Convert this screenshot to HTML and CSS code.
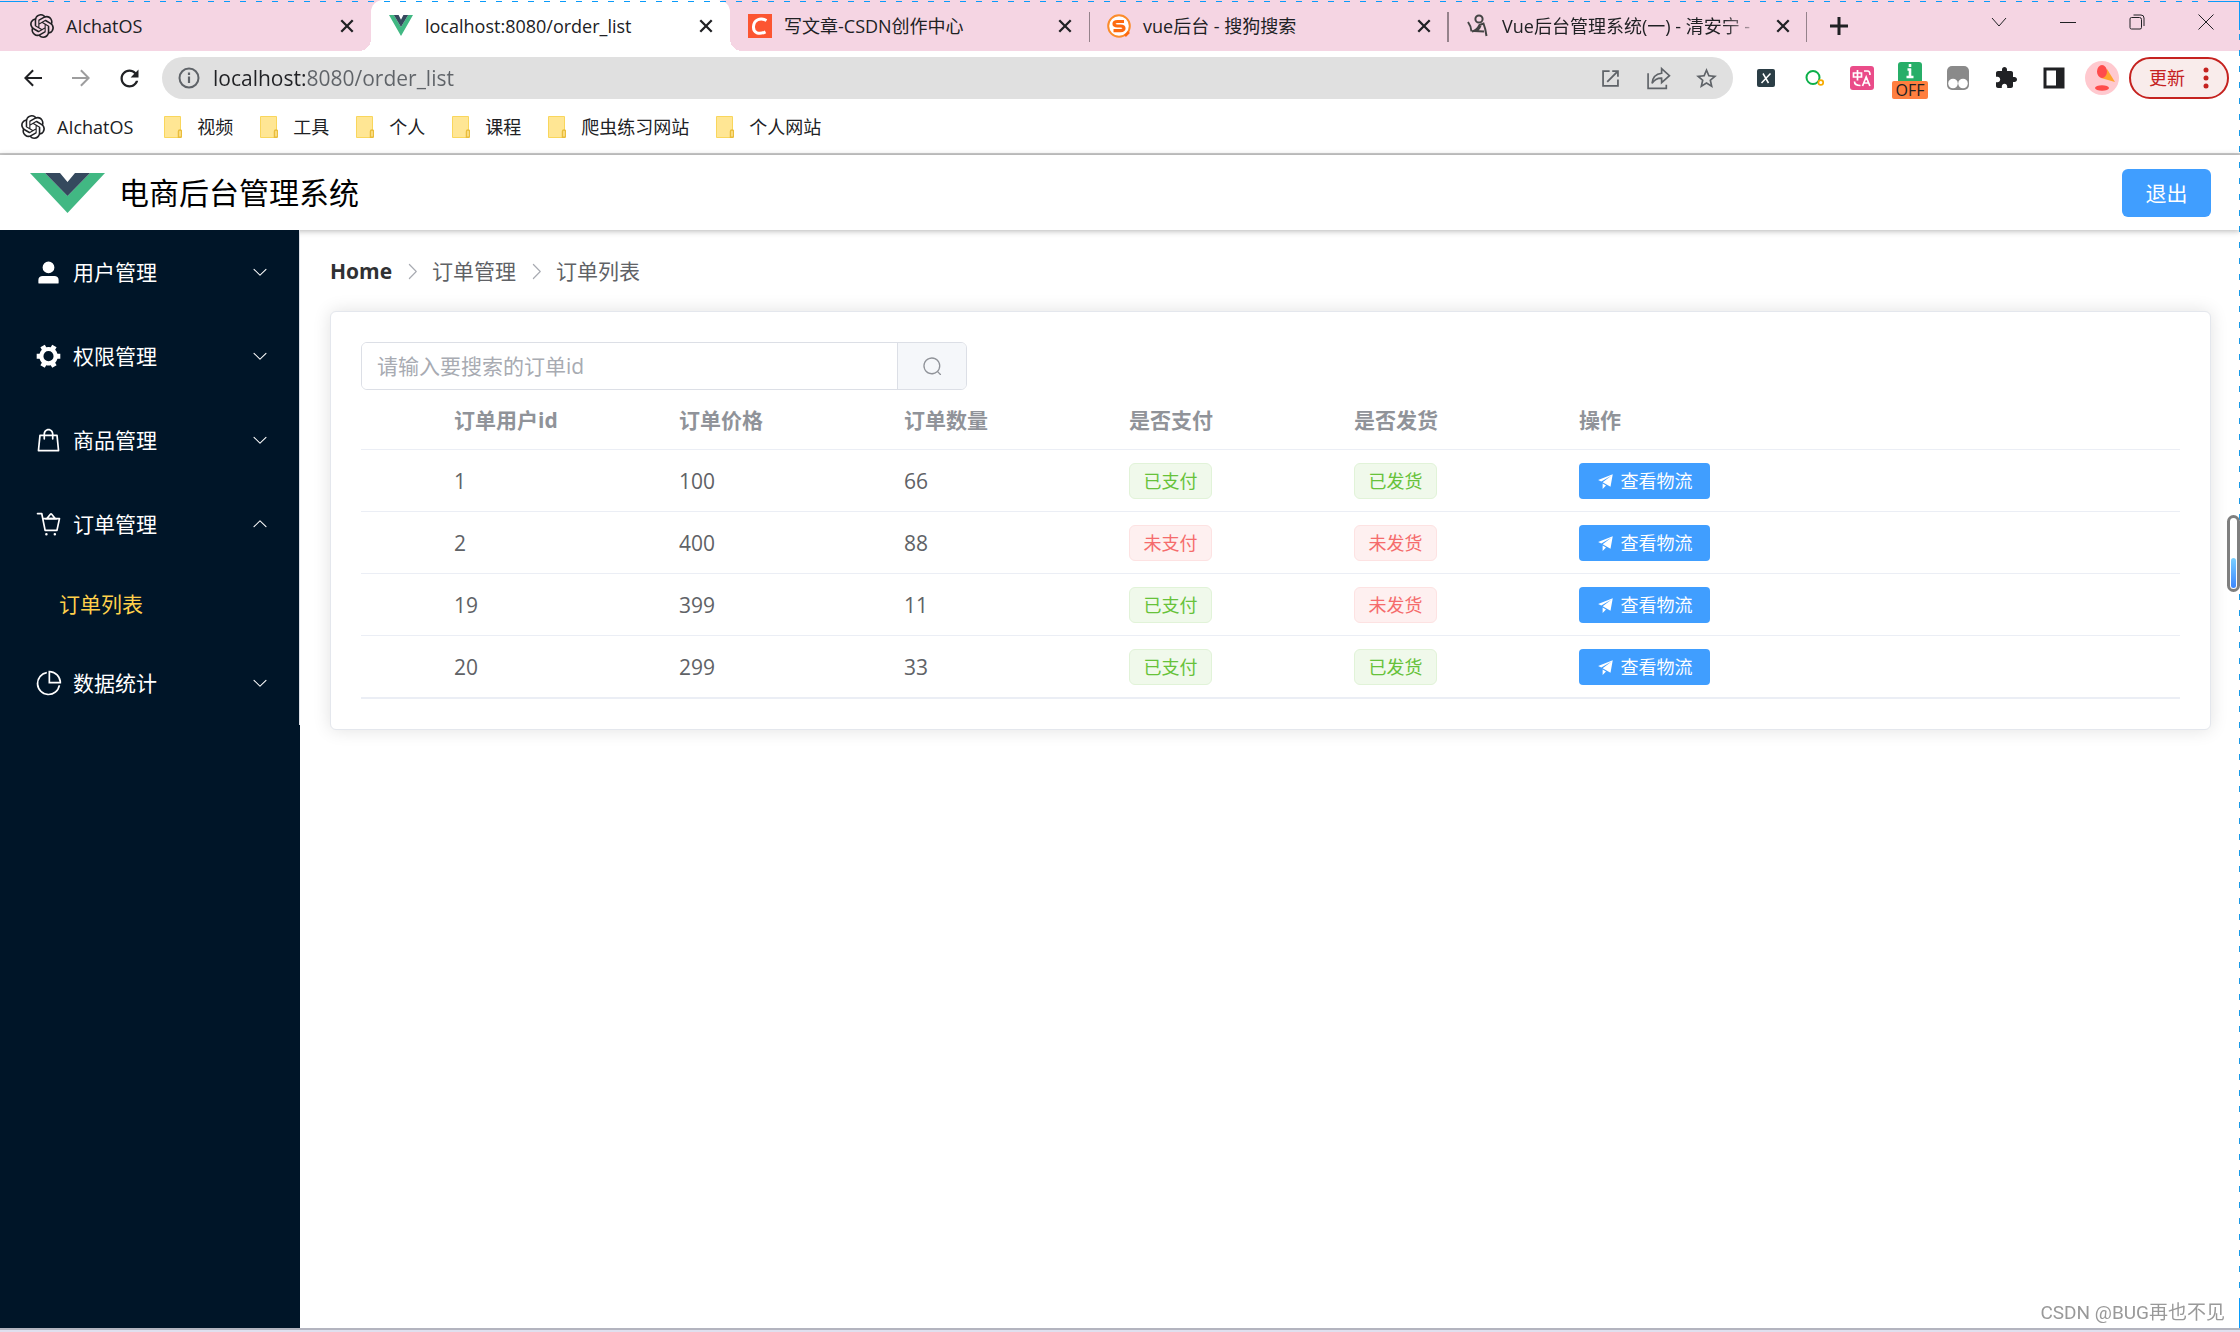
FILE: index.html
```html
<!DOCTYPE html>
<html lang="zh-CN">
<head>
<meta charset="utf-8">
<title>电商后台管理系统</title>
<link rel="stylesheet" href="styles.css">
</head>
<body>
<svg class="defs" aria-hidden="true">
  <symbol id="i-openai" viewBox="0 0 24 24"><path d="M22.2819 9.8211a5.9847 5.9847 0 0 0-.5157-4.9108 6.0462 6.0462 0 0 0-6.5098-2.9A6.0651 6.0651 0 0 0 4.9807 4.1818a5.9847 5.9847 0 0 0-3.9977 2.9 6.0462 6.0462 0 0 0 .7427 7.0966 5.98 5.98 0 0 0 .511 4.9107 6.051 6.051 0 0 0 6.5146 2.9001A5.9847 5.9847 0 0 0 13.2599 24a6.0557 6.0557 0 0 0 5.7718-4.2058 5.9894 5.9894 0 0 0 3.9977-2.9001 6.0557 6.0557 0 0 0-.7475-7.0729zm-9.022 12.6081a4.4755 4.4755 0 0 1-2.8764-1.0408l.1419-.0804 4.7783-2.7582a.7948.7948 0 0 0 .3927-.6813v-6.7369l2.02 1.1686a.071.071 0 0 1 .038.052v5.5826a4.504 4.504 0 0 1-4.4945 4.4944zm-9.6607-4.1254a4.4708 4.4708 0 0 1-.5346-3.0137l.142.0852 4.783 2.7582a.7712.7712 0 0 0 .7806 0l5.8428-3.3685v2.3324a.0804.0804 0 0 1-.0332.0615L9.74 19.9502a4.4992 4.4992 0 0 1-6.1408-1.6464zM2.3408 7.8956a4.485 4.485 0 0 1 2.3655-1.9728V11.6a.7664.7664 0 0 0 .3879.6765l5.8144 3.3543-2.0201 1.1685a.0757.0757 0 0 1-.071 0l-4.8303-2.7865A4.504 4.504 0 0 1 2.3408 7.872zm16.5963 3.8558L13.1038 8.364 15.1192 7.2a.0757.0757 0 0 1 .071 0l4.8303 2.7913a4.4944 4.4944 0 0 1-.6765 8.1042v-5.6772a.79.79 0 0 0-.407-.667zm2.0107-3.0231l-.142-.0852-4.7735-2.7818a.7759.7759 0 0 0-.7854 0L9.409 9.2297V6.8974a.0662.0662 0 0 1 .0284-.0615l4.8303-2.7866a4.4992 4.4992 0 0 1 6.6802 4.66zM8.3065 12.863l-2.02-1.1638a.0804.0804 0 0 1-.038-.0567V6.0742a4.4992 4.4992 0 0 1 7.3757-3.4537l-.142.0805L8.704 5.459a.7948.7948 0 0 0-.3927.6813zm1.0976-2.3654l2.602-1.4998 2.6069 1.4998v2.9994l-2.5974 1.4997-2.6067-1.4997Z"/></symbol>
  <symbol id="i-vue" viewBox="0 0 75 54" preserveAspectRatio="none"><path fill="#41b883" d="M0 0h15l22.500 31L60 0h15L37.500 54z"/><path fill="#35495e" d="M15 0h15l7.500 12L45 0h15L37.500 31z"/></symbol>
  <symbol id="i-close" viewBox="0 0 14 14"><path d="M2 2l10 10M12 2L2 12" fill="none" stroke="currentColor" stroke-width="2"/></symbol>
  <symbol id="i-back" viewBox="0 0 24 24"><path d="M21 11H6.830l6-6L11.400 3.600 3 12l8.400 8.400 1.430-1.400-6-6H21z"/></symbol>
  <symbol id="i-folder" viewBox="0 0 18 22"><path fill="#ffe694" stroke="#f9d65c" d="M.500.500h16v21h-16z"/><path fill="#ffe694" stroke="#e9bd3c" stroke-width="1.500" d="M14.500 21v-5.500a1.500 1.500 0 0 1 3 0V20q0 1.300-1.300 1.300H14.500z"/></symbol>
  <symbol id="i-down" viewBox="0 0 1024 1024"><path d="M831.872 340.864 512 652.672 192.128 340.864a30.592 30.592 0 0 0-42.752 0 29.120 29.120 0 0 0 0 41.600L489.664 714.240a32 32 0 0 0 44.672 0l340.288-331.712a29.120 29.120 0 0 0 0-41.728 30.592 30.592 0 0 0-42.752 0z"/></symbol>
  <symbol id="i-right" viewBox="0 0 1024 1024"><path d="M340.864 149.312a30.592 30.592 0 0 0 0 42.752L652.736 512 340.864 831.872a30.592 30.592 0 0 0 0 42.752 29.120 29.120 0 0 0 41.728 0L714.240 534.336a32 32 0 0 0 0-44.672L382.592 149.376a29.120 29.120 0 0 0-41.728 0z"/></symbol>
  <symbol id="i-send" viewBox="0 0 1024 1024"><path d="m64 448 832-320-128 704-446.080-243.328L832 192 242.816 545.472 64 448zm256 512V657.024L512 768 320 960z"/></symbol>
</svg>

<header class="browser">
  <div class="tabstrip">
    <div class="tab"><svg class="fav"><use href="#i-openai"/></svg><span class="tab-title">AIchatOS</span><button class="tab-close" aria-label="关闭"><svg><use href="#i-close"/></svg></button></div>
    <div class="tab active"><svg class="fav vue"><use href="#i-vue"/></svg><span class="tab-title">localhost:8080/order_list</span><button class="tab-close" aria-label="关闭"><svg><use href="#i-close"/></svg></button></div>
    <div class="tab"><svg class="fav" viewBox="0 0 24 24"><path fill="#fc5531" d="M0 0h24v24H0z"/><path d="M18.500 6.500C12 3 6 6 5.500 12.500S11 21 17.500 17.800" fill="none" stroke="#fff" stroke-width="3"/></svg><span class="tab-title">写文章-CSDN创作中心</span><button class="tab-close" aria-label="关闭"><svg><use href="#i-close"/></svg></button></div>
    <div class="tab ruled"><svg class="fav" viewBox="0 0 24 24"><circle cx="12" cy="12" r="10.800" fill="#fff" stroke="#fb8c2b" stroke-width="2"/><path d="M17 7.500H10.500Q7 7.500 7 9.700T10.500 12h3Q17 12 17 14.200T13.500 16.600H6.500" fill="none" stroke="#fd6a10" stroke-width="3.200"/><path d="M18 22l4-4" stroke="#fd6a10" stroke-width="2.500"/></svg><span class="tab-title">vue后台 - 搜狗搜索</span><button class="tab-close" aria-label="关闭"><svg><use href="#i-close"/></svg></button></div>
    <div class="tab ruled"><svg class="fav" viewBox="0 0 24 24"><path d="M2 8q3 4 3.500 9.500M6 17.500q5-1 7.500-6.500l4-1.500q2 5 3 12.500M14.500 12q-2 5-6.500 5l10 .5" fill="none" stroke="#444" stroke-width="2"/><circle cx="13" cy="5" r="3.600" fill="none" stroke="#444" stroke-width="2"/></svg><span class="tab-title fade">Vue后台管理系统(一) - 清安宁 -</span><button class="tab-close" aria-label="关闭"><svg><use href="#i-close"/></svg></button></div>
    <button class="new-tab" aria-label="新标签页"><svg viewBox="0 0 18 18"><path d="M9 0v18M0 9h18" stroke="currentColor" stroke-width="3"/></svg></button>
    <div class="window-controls">
      <button aria-label="搜索标签页"><svg viewBox="0 0 16 16"><path d="M1 4l7 8 7-8" fill="none" stroke="currentColor"/></svg></button>
      <button aria-label="最小化"><svg viewBox="0 0 16 16"><path d="M0 8.500h16" stroke="currentColor"/></svg></button>
      <button aria-label="还原"><svg viewBox="0 0 16 16"><path d="M2.500 3.500h8q2 0 2 2v8q0 1.500-1.500 1.500H2.500Q1 15 1 13.500V5q0-1.500 1.500-1.500zM4.500 1h7.500q3 0 3 3v8" fill="none" stroke="currentColor"/></svg></button>
      <button aria-label="关闭窗口"><svg viewBox="0 0 16 16"><path d="M.500.500l15 15M15.500.500l-15 15" stroke="currentColor"/></svg></button>
    </div>
  </div>

  <div class="toolbar">
    <button class="tool" aria-label="后退"><svg><use href="#i-back"/></svg></button>
    <button class="tool muted" aria-label="前进"><svg class="flip-x"><use href="#i-back"/></svg></button>
    <button class="tool" aria-label="重新加载"><svg class="big" viewBox="0 0 24 24"><path d="M17.650 6.350C16.200 4.900 14.210 4 12 4c-4.420 0-7.990 3.580-7.990 8s3.570 8 7.990 8c3.730 0 6.840-2.550 7.730-6h-2.080c-.82 2.330-3.040 4-5.650 4-3.310 0-6-2.690-6-6s2.690-6 6-6c1.660 0 3.140.69 4.220 1.780L13 11h7V4z"/></svg></button>
    <div class="omnibox">
      <svg class="info" viewBox="0 0 22 22"><circle cx="11" cy="11" r="9.500" fill="none" stroke="currentColor" stroke-width="2"/><path d="M11 9.500V16M11 5.500V8" stroke="currentColor" stroke-width="2.200"/></svg>
      <input class="url" type="text" aria-label="地址" value="localhost:8080/order_list">
      <button class="tool grey" aria-label="在新窗口中打开"><svg viewBox="0 0 24 24"><path d="M19.500 19.500h-15v-15H11v-2H2.500v19h19V13h-2zM14 2.500v2h4L7.500 15l1.500 1.500L19.500 6v4h2V2.500z"/></svg></button>
      <button class="tool grey" aria-label="分享"><svg class="big" viewBox="0 0 24 24"><path d="M2 7v14.500h17.500V18M15 7V2.500l7.500 6.800-7.500 6.700v-4.300q-6-.2-9.200 5Q6.500 8 15 7z" fill="none" stroke="currentColor" stroke-width="1.600"/></svg></button>
      <button class="tool grey" aria-label="收藏"><svg class="big" viewBox="0 0 24 24"><path d="M22 9.240l-7.190-.62L12 2 9.190 8.630 2 9.240l5.460 4.730L5.820 21 12 17.270 18.180 21l-1.630-7.030L22 9.240zM12 15.400l-3.760 2.270 1-4.280-3.320-2.880 4.380-.38L12 6.100l1.710 4.040 4.380.38-3.320 2.880 1 4.280L12 15.400z"/></svg></button>
    </div>
    <div class="extensions">
      <button class="tool" aria-label="XPath"><svg viewBox="0 0 24 24"><rect x="3" y="3" width="18" height="18" rx="2" fill="#2b3e46"/><path d="M9 7.500l5.500 9.500M16.500 7.500L7.500 17" stroke="#fff" stroke-width="1.500"/></svg></button>
      <button class="tool" aria-label="搜索助手"><svg viewBox="0 0 24 24"><circle cx="11" cy="11.500" r="6.500" fill="none" stroke="#0cb04a" stroke-width="2"/><circle cx="18.800" cy="16.500" r="2.400" fill="#fff" stroke="#f7ab00" stroke-width="1.700"/></svg></button>
      <button class="tool" aria-label="翻译"><svg viewBox="0 0 24 24"><rect width="24" height="24" rx="3" fill="#ea4c89"/><path d="M3.500 7h8v4h-8zM7.500 4v10.500M14 5h3.500q2.500 0 2.500 4M4.500 15.500q0 4 6 4M12.500 20l3.700-9 3.700 9M13.800 17h5" fill="none" stroke="#fff" stroke-width="1.700"/></svg></button>
      <button class="tool badge" aria-label="信息助手"><svg viewBox="0 0 24 24"><rect width="24" height="24" rx="3" fill="#27ae68"/><path d="M12 6.500V16M12 2v3M8.500 15h7M9.500 7.500H13" stroke="#fff" stroke-width="2.600"/></svg><span class="off">OFF</span></button>
      <button class="tool" aria-label="篡改猴"><svg viewBox="0 0 24 24"><rect x="1" y="0" width="22" height="24" rx="5" fill="#8a8a8a"/><circle cx="7" cy="17.500" r="4.800" fill="#fff"/><circle cx="17" cy="17.500" r="4.800" fill="#fff"/></svg></button>
      <button class="tool" aria-label="扩展程序"><svg viewBox="0 0 24 24"><path d="M20.500 11H19V7c0-1.100-.9-2-2-2h-4V3.500C13 2.120 11.880 1 10.500 1S8 2.120 8 3.500V5H4c-1.100 0-1.990.9-1.990 2v3.800H3.500c1.490 0 2.700 1.210 2.700 2.700s-1.210 2.700-2.700 2.700H2V20c0 1.100.9 2 2 2h3.800v-1.500c0-1.490 1.210-2.700 2.700-2.700 1.490 0 2.700 1.210 2.700 2.700V22H17c1.100 0 2-.9 2-2v-4h1.500c1.380 0 2.500-1.120 2.500-2.500S21.880 11 20.500 11z"/></svg></button>
      <button class="tool" aria-label="侧边栏"><svg viewBox="0 0 24 24"><path fill-rule="evenodd" d="M1.500 1.500h21v21h-21zM4.500 4.500v15H14v-15z"/></svg></button>
      <button class="tool" aria-label="用户"><svg class="avatar" viewBox="0 0 34 34"><circle cx="17" cy="17" r="17" fill="#ffc9cf"/><path d="M16 17L30 21 22 8z" fill="#ffa42e"/><ellipse cx="17" cy="10.500" rx="5" ry="6.500" fill="#ff4b4b"/><ellipse cx="17" cy="27" rx="7" ry="2.800" fill="#ff4b4b"/></svg></button>
    </div>
    <button class="update">更新<svg viewBox="0 0 6 22"><circle cx="3" cy="3" r="2.500"/><circle cx="3" cy="11" r="2.500"/><circle cx="3" cy="19" r="2.500"/></svg></button>
  </div>

  <nav class="bookmarks" aria-label="书签">
    <a class="site" href="#"><svg class="fav"><use href="#i-openai"/></svg>AIchatOS</a>
    <a href="#"><svg><use href="#i-folder"/></svg>视频</a>
    <a href="#"><svg><use href="#i-folder"/></svg>工具</a>
    <a href="#"><svg><use href="#i-folder"/></svg>个人</a>
    <a href="#"><svg><use href="#i-folder"/></svg>课程</a>
    <a href="#"><svg><use href="#i-folder"/></svg>爬虫练习网站</a>
    <a href="#"><svg><use href="#i-folder"/></svg>个人网站</a>
  </nav>
</header>

<header class="app-header">
  <svg class="logo"><use href="#i-vue"/></svg>
  <h1>电商后台管理系统</h1>
  <button class="logout">退出</button>
</header>

<div class="app-body">
  <aside class="sidebar">
    <nav class="menu" aria-label="主菜单">
      <button class="menu-item"><svg class="menu-icon" viewBox="0 0 1024 1024"><path d="M288 320a224 224 0 1 0 448 0 224 224 0 1 0-448 0zm544 608H160a32 32 0 0 1-32-32v-96a160 160 0 0 1 160-160h448a160 160 0 0 1 160 160v96a32 32 0 0 1-32 32z"/></svg><span>用户管理</span><svg class="chevron"><use href="#i-down"/></svg></button>
      <button class="menu-item"><svg class="menu-icon" viewBox="0 0 1024 1024"><path d="M764.416 254.720a351.680 351.680 0 0 1 86.336 149.184H960v192.064H850.752a351.680 351.680 0 0 1-86.336 149.312l54.720 94.720-166.272 96-54.592-94.720a352.640 352.640 0 0 1-172.480 0L371.136 936l-166.272-96 54.720-94.720a351.680 351.680 0 0 1-86.336-149.312H64v-192h109.248a351.680 351.680 0 0 1 86.336-149.312L204.800 160l166.208-96h.192l54.656 94.592a352.640 352.640 0 0 1 172.480 0L652.800 64h.128L819.200 160l-54.720 94.720zM704 499.968a192 192 0 1 0-384 0 192 192 0 0 0 384 0z"/></svg><span>权限管理</span><svg class="chevron"><use href="#i-down"/></svg></button>
      <button class="menu-item"><svg class="menu-icon" viewBox="0 0 1024 1024"><path d="M320 288v-22.336C320 154.688 405.504 64 512 64s192 90.688 192 201.664v22.400h131.072a32 32 0 0 1 31.808 28.800l57.600 576a32 32 0 0 1-31.808 35.200H131.328a32 32 0 0 1-31.808-35.200l57.600-576a32 32 0 0 1 31.808-28.800H320zm64 0h256v-22.336C640 189.248 582.272 128 512 128c-70.272 0-128 61.248-128 137.664v22.400zm-64 64H217.920l-51.200 512h690.560l-51.264-512H704v96a32 32 0 1 1-64 0v-96H384v96a32 32 0 0 1-64 0v-96z"/></svg><span>商品管理</span><svg class="chevron"><use href="#i-down"/></svg></button>
      <button class="menu-item" aria-expanded="true"><svg class="menu-icon" viewBox="0 0 1024 1024"><path d="M432 928a48 48 0 1 1 0-96 48 48 0 0 1 0 96zm320 0a48 48 0 1 1 0-96 48 48 0 0 1 0 96zM96 128a32 32 0 0 1 0-64h160a32 32 0 0 1 31.360 25.728L320.640 256H928a32 32 0 0 1 31.296 38.720l-96 448A32 32 0 0 1 832 768H384a32 32 0 0 1-31.360-25.728L229.760 128H96zm314.240 576h395.904l82.304-384H333.440l76.800 384z"/><path d="M699.648 256 608 145.984 516.352 256h183.296zm-140.800-151.040a64 64 0 0 1 98.304 0L836.352 320H379.648l179.200-215.040z"/></svg><span>订单管理</span><svg class="chevron flip-y"><use href="#i-down"/></svg></button>
      <a class="submenu-item" href="#">订单列表</a>
      <button class="menu-item"><svg class="menu-icon" viewBox="0 0 1024 1024"><path d="M448 68.480v64.832A384.128 384.128 0 0 0 512 896a384.128 384.128 0 0 0 378.688-320h64.768A448.128 448.128 0 0 1 64 512 448.128 448.128 0 0 1 448 68.480z"/><path d="M576 97.280V448h350.720A384.064 384.064 0 0 0 576 97.280zM512 64V33.152A448 448 0 0 1 990.848 512H512V64z"/></svg><span>数据统计</span><svg class="chevron"><use href="#i-down"/></svg></button>
    </nav>
  </aside>

  <main class="main">
    <nav class="breadcrumb" aria-label="面包屑">
      <a href="#">Home</a><svg><use href="#i-right"/></svg><span>订单管理</span><svg><use href="#i-right"/></svg><span>订单列表</span>
    </nav>
    <section class="card">
      <form class="search">
        <input type="text" aria-label="订单id" placeholder="请输入要搜索的订单id">
        <button type="button" aria-label="搜索"><svg viewBox="0 0 1024 1024"><path d="m795.904 750.720 124.992 124.928a32 32 0 0 1-45.248 45.248L750.656 795.904a416 416 0 1 1 45.248-45.248zM480 832a352 352 0 1 0 0-704 352 352 0 0 0 0 704z"/></svg></button>
      </form>
      <table class="orders">
        <colgroup><col class="col-index"><col class="col"><col class="col"><col class="col"><col class="col"><col class="col"><col></colgroup>
        <thead><tr><th></th><th>订单用户id</th><th>订单价格</th><th>订单数量</th><th>是否支付</th><th>是否发货</th><th>操作</th></tr></thead>
        <tbody>
          <tr><td></td><td>1</td><td>100</td><td>66</td><td><span class="tag success">已支付</span></td><td><span class="tag success">已发货</span></td><td><button class="action"><svg><use href="#i-send"/></svg>查看物流</button></td></tr>
          <tr><td></td><td>2</td><td>400</td><td>88</td><td><span class="tag danger">未支付</span></td><td><span class="tag danger">未发货</span></td><td><button class="action"><svg><use href="#i-send"/></svg>查看物流</button></td></tr>
          <tr><td></td><td>19</td><td>399</td><td>11</td><td><span class="tag success">已支付</span></td><td><span class="tag danger">未发货</span></td><td><button class="action"><svg><use href="#i-send"/></svg>查看物流</button></td></tr>
          <tr><td></td><td>20</td><td>299</td><td>33</td><td><span class="tag success">已支付</span></td><td><span class="tag success">已发货</span></td><td><button class="action"><svg><use href="#i-send"/></svg>查看物流</button></td></tr>
        </tbody>
      </table>
    </section>
  </main>
</div>
<footer class="window-edge"></footer>

<div class="marquee-top"></div>
<div class="marquee-right"></div>
<div class="scroll-widget"><div class="scroll-level"></div></div>
<div class="watermark">CSDN @BUG再也不见</div>
</body>
</html>
```
FILE: styles.css
```css
* { box-sizing: border-box; }

body {
  margin: 0;
  min-height: 100vh;
  display: flex;
  flex-direction: column;
  background: #fff;
  color: #000;
  font: 21px/32px "Open Sans", "Noto Sans CJK SC", sans-serif;
}

button, input { font: inherit; color: inherit; margin: 0; }
button { padding: 0; border: 0; background: none; display: flex; align-items: center; justify-content: center; }
a { color: inherit; text-decoration: none; }
svg { display: block; flex: none; fill: currentColor; }
.defs { position: absolute; width: 0; height: 0; }
.flip-x { transform: scaleX(-1); }
.flip-y { transform: scaleY(-1); }

/* Browser window */
.browser { color: #202124; font-size: 18px; line-height: 24px; border-bottom: 2px solid #ccc; }
.fav { width: 24px; height: 24px; }
.fav.vue { height: 21px; }

.tabstrip { display: flex; height: 51px; padding-left: 12px; background: #f5d5e3; }
.tab { position: relative; flex: 0 1 359px; min-width: 0; display: flex; align-items: center; gap: 12px; padding: 0 16px 0 18px; }
.tab.active { background: #fff; border-radius: 12px 12px 0 0; }
.tab.active::before, .tab.active::after { content: ""; position: absolute; bottom: 0; width: 12px; height: 12px; }
.tab.active::before { right: 100%; background: radial-gradient(circle at 0 0, transparent 12px, #fff 12px); }
.tab.active::after { left: 100%; background: radial-gradient(circle at 100% 0, transparent 12px, #fff 12px); }
.tab.ruled::before, .tab.ruled::after { content: ""; position: absolute; top: 12px; width: 1px; height: 30px; background: #95828b; }
.tab.ruled::before { left: 0; }
.tab.ruled::after { right: 0; }
.tab-title { flex: 1; white-space: nowrap; }
.tab-title.fade { -webkit-mask-image: linear-gradient(to right, #000 85%, transparent 100%); }
.tab-close svg { width: 16px; height: 16px; }
.new-tab { width: 64px; }
.new-tab svg { width: 18px; height: 18px; }
.window-controls { display: flex; height: 44px; margin-left: auto; }
.window-controls button { width: 69px; }
.window-controls svg { width: 16px; height: 16px; }

.toolbar { display: flex; align-items: center; padding: 6px 11px 6px 9px; }
.tool { width: 48px; height: 42px; }
.tool svg { width: 24px; height: 24px; }
.tool svg.big { width: 27px; height: 27px; }
.tool svg.avatar { width: 34px; height: 34px; }
.muted { color: #9d9d9e; }
.grey { color: #5f6368; }
.omnibox { flex: 1; display: flex; align-items: center; height: 42px; margin: 0 9px; padding: 0 3px 0 16px; border-radius: 21px; background: #e0e0e0; }
.omnibox .tool svg { width: 21px; height: 21px; }
.omnibox .tool svg.big { width: 25px; height: 25px; }
.info { width: 22px; height: 22px; color: #5f6368; }
.url { flex: 1; min-width: 0; height: 32px; padding: 0; margin-left: 13px; border: 0; outline: 0; font-size: 21px; -webkit-text-fill-color: transparent; background: linear-gradient(to right, #202124 92px, #5f6368 92px); -webkit-background-clip: text; background-clip: text; }
.extensions { display: flex; }
.badge { position: relative; }
.off { position: absolute; left: 6px; bottom: 0; width: 36px; height: 18px; border-radius: 2px; background: #ff7f3f; font-size: 16px; line-height: 18px; text-align: center; }
.badge svg { margin-bottom: 8px; }
.update { gap: 18px; width: 100px; height: 42px; margin-left: 3px; border: 2px solid #c5221f; border-radius: 21px; background: #f9eceb; color: #c5221f; }
.update svg { width: 6px; height: 22px; }

.bookmarks { display: flex; align-items: center; gap: 27px; height: 48px; padding: 0 21px 4px; }
.bookmarks a { display: flex; align-items: center; gap: 15px; }
.bookmarks a.site { gap: 12px; margin-right: 4px; }
.bookmarks svg { width: 18px; height: 22px; }
.bookmarks .fav { width: 24px; height: 24px; }

/* Application header */
.app-header { position: relative; display: flex; align-items: center; gap: 14px; height: 75px; padding: 0 29px 0 30px; background: #fff; box-shadow: 0 1px 6px rgba(0, 0, 0, .3); }
.logo { width: 75px; height: 40px; }
.app-header h1 { margin: 0; font-size: 30px; line-height: 40px; font-weight: 400; }
.logout { width: 89px; height: 48px; margin-left: auto; border-radius: 6px; background: #409eff; color: #fff; }

/* Sidebar */
.app-body { flex: 1; display: flex; }
.sidebar { position: relative; flex: none; width: 300px; background: #001528; }
.menu { display: flex; flex-direction: column; border-right: 1px solid #dcdfe6; color: #fff; }
.menu-item { height: 84px; padding: 0 30px 0 35px; justify-content: flex-start; gap: 11px; }
.menu-icon { width: 27px; height: 27px; }
.chevron { width: 18px; height: 18px; margin-left: auto; }
.submenu-item { height: 75px; padding-left: 59px; line-height: 76px; color: #ffd04b; }

/* Content */
.main { flex: 1; min-width: 0; padding: 25px 29px 30px 30px; color: #606266; }
.breadcrumb { display: flex; align-items: center; }
.breadcrumb a { color: #303133; font-weight: 700; }
.breadcrumb svg { width: 21px; height: 21px; margin: 0 9px 0 10px; color: #a8abb2; }
.card { margin-top: 24px; padding: 30px; border: 1px solid #e4e7ed; border-radius: 6px; background: #fff; box-shadow: 0 0 18px rgba(0, 0, 0, .12); }
.search { display: flex; width: 606px; height: 48px; border: 1px solid #dcdfe6; border-radius: 6px; overflow: hidden; }
.search input { flex: 1; min-width: 0; padding: 0 15px; border: 0; outline: 0; }
.search input::placeholder { color: #a8abb2; opacity: 1; }
.search button { width: 69px; border-left: 1px solid #dcdfe6; background: #f5f7fa; color: #909399; }
.search svg { width: 21px; height: 21px; }

.orders { width: 100%; table-layout: fixed; border-collapse: separate; border-spacing: 0; border-bottom: 1px solid #ebeef5; }
.col-index { width: 75px; }
.col { width: 225px; }
.orders th, .orders td { padding: 0 18px; text-align: left; border-bottom: 1px solid #ebeef5; }
.orders th { height: 60px; color: #909399; font-weight: 700; }
.orders td { height: 62px; }
.tag { display: flex; align-items: center; justify-content: center; width: 83px; height: 36px; border: 1px solid; border-radius: 6px; font-size: 18px; }
.success { color: #67c23a; background: #f0f9eb; border-color: #e1f3d8; }
.danger { color: #f56c6c; background: #fef0f0; border-color: #fde2e2; }
.action { gap: 6px; width: 131px; height: 36px; border-radius: 4px; background: #409eff; color: #fff; font-size: 18px; }
.action svg { width: 18px; height: 18px; }

.window-edge { height: 4px; border-top: 2px solid #b3b4bf; background: #dfe0ef; }

/* Overlays */
.marquee-top { position: fixed; top: 1px; left: 0; right: 0; height: 1px; background: linear-gradient(#0a9bfa, #0a9bfa) 0 0 / 28px 1px no-repeat, linear-gradient(#0a9bfa, #0a9bfa) 100% 0 / 29px 1px no-repeat, repeating-linear-gradient(to right, #0a9bfa 0 6px, transparent 6px 16px); }
.marquee-right { position: fixed; top: 2px; right: 0; bottom: 4px; width: 1px; background: linear-gradient(#0a9bfa, #0a9bfa) 0 0 / 1px 28px no-repeat, linear-gradient(#0a9bfa, #0a9bfa) 0 100% / 1px 30px no-repeat, repeating-linear-gradient(to bottom, #1a9be8 0 6px, transparent 6px 16px); }
.scroll-widget { position: fixed; top: 515px; right: 0; width: 13px; height: 77px; display: flex; align-items: flex-end; padding: 1px; border: 3px solid #7f7f7f; border-radius: 7px; background: #fff; }
.scroll-level { width: 5px; height: 30px; border-radius: 3px; background: linear-gradient(#7ad0ff, #3b87ff); }
.watermark { position: fixed; right: 15px; bottom: 7px; color: #999; font: 19px/24px Roboto, "Noto Sans CJK SC", sans-serif; }
```
